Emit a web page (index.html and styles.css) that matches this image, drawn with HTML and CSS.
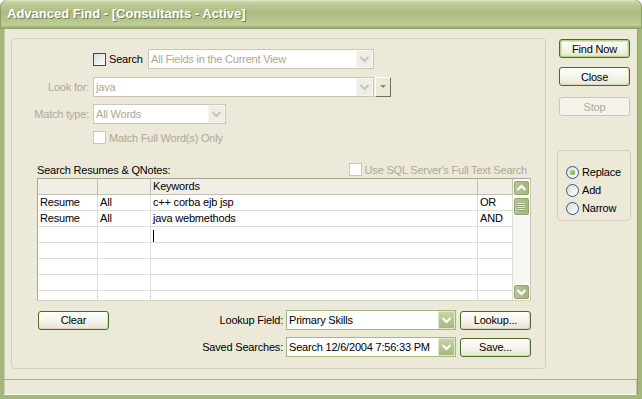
FILE: index.html
```html
<!DOCTYPE html>
<html>
<head>
<meta charset="utf-8">
<title>Advanced Find</title>
<link rel="stylesheet" href="styles.css">
</head>
<body>
<div class="window">
  <div class="titlebar"><span class="title">Advanced Find - [Consultants - Active]</span></div>
  <div class="frame">
    <div class="client">
      <div class="group main">
        <div class="frow r1">
          <div class="lblcol"></div>
          <label class="chkwrap search"><span class="chk"></span><span class="chktext">Search</span></label>
          <div class="combo dis w-fields"><span class="val">All Fields in the Current View</span><span class="ddb dis"><svg width="17" height="18" viewBox="0 0 17 18"><path d="M4.5 7 L8.5 11 L12.5 7" fill="none" stroke="#c8c6ba" stroke-width="2"/></svg></span></div>
        </div>
        <div class="frow r2">
          <div class="lblcol">Look for:</div>
          <div class="combo dis w-look"><span class="val">java</span><span class="ddb dis"><svg width="17" height="18" viewBox="0 0 17 18"><path d="M4.5 7 L8.5 11 L12.5 7" fill="none" stroke="#c8c6ba" stroke-width="2"/></svg></span></div>
          <span class="minibtn"><span class="tri"></span></span>
        </div>
        <div class="frow r3">
          <div class="lblcol">Match type:</div>
          <div class="combo dis w-match"><span class="val">All Words</span><span class="ddb dis"><svg width="17" height="18" viewBox="0 0 17 18"><path d="M4.5 7 L8.5 11 L12.5 7" fill="none" stroke="#c8c6ba" stroke-width="2"/></svg></span></div>
        </div>
        <div class="frow r4">
          <div class="lblcol"></div>
          <label class="chkwrap"><span class="chk dis"></span><span class="chktext distext">Match Full Word(s) Only</span></label>
        </div>
        <div class="secrow">
          <span>Search Resumes &amp; QNotes:</span>
          <label class="chkwrap"><span class="chk dis"></span><span class="chktext distext">Use SQL Server's Full Text Search</span></label>
        </div>
        <div class="gridbox">
          <div class="gtable">
            <div class="c h"></div><div class="c h"></div><div class="c h">Keywords</div><div class="c h"></div>
            <div class="c">Resume</div><div class="c">All</div><div class="c">c++ corba ejb jsp</div><div class="c">OR</div>
            <div class="c">Resume</div><div class="c">All</div><div class="c">java webmethods</div><div class="c">AND</div>
            <div class="c"></div><div class="c"></div><div class="c"><span class="caret"></span></div><div class="c"></div>
            <div class="c"></div><div class="c"></div><div class="c"></div><div class="c"></div>
            <div class="c"></div><div class="c"></div><div class="c"></div><div class="c"></div>
            <div class="c"></div><div class="c"></div><div class="c"></div><div class="c"></div>
            <div class="c"></div><div class="c"></div><div class="c"></div><div class="c"></div>
          </div>
          <div class="vscroll">
            <span class="sbtn"><svg width="15" height="14" viewBox="0 0 15 14"><path d="M3.5 9 L7.5 5 L11.5 9" fill="none" stroke="#fff" stroke-width="2"/></svg></span>
            <span class="thumb"><span class="grip"></span><span class="grip"></span><span class="grip"></span><span class="grip"></span></span>
            <span class="track"></span>
            <span class="sbtn"><svg width="15" height="14" viewBox="0 0 15 14"><path d="M3.5 5 L7.5 9 L11.5 5" fill="none" stroke="#fff" stroke-width="2"/></svg></span>
          </div>
        </div>
        <div class="brow first">
          <button class="btn clear">Clear</button>
          <span class="blabel">Lookup Field:</span>
          <div class="combo en w-bottom"><span class="val">Primary Skills</span><span class="ddb en"><svg width="17" height="18" viewBox="0 0 17 18"><path d="M4.5 7 L8.5 11 L12.5 7" fill="none" stroke="#fff" stroke-width="2"/></svg></span></div>
          <button class="btn">Lookup...</button>
        </div>
        <div class="brow">
          <span class="blabel">Saved Searches:</span>
          <div class="combo en w-bottom"><span class="val">Search 12/6/2004 7:56:33 PM</span><span class="ddb en"><svg width="17" height="18" viewBox="0 0 17 18"><path d="M4.5 7 L8.5 11 L12.5 7" fill="none" stroke="#fff" stroke-width="2"/></svg></span></div>
          <button class="btn">Save...</button>
        </div>
      </div>
      <div class="side">
        <button class="btn default">Find Now</button>
        <button class="btn close">Close</button>
        <button class="btn stop" disabled>Stop</button>
        <div class="group rgroup">
          <label class="radio"><span class="rc checked"></span><span>Replace</span></label>
          <label class="radio"><span class="rc"></span><span>Add</span></label>
          <label class="radio"><span class="rc"></span><span>Narrow</span></label>
        </div>
      </div>
    </div>
    <div class="statusbar"></div>
  </div>
</div>
</body>
</html>
```

FILE: styles.css
```css
* { box-sizing: border-box; }
html, body { margin: 0; padding: 0; background: #ffffff; }
body {
  font-family: "Liberation Sans", Arial, sans-serif;
  font-size: 11px;
  letter-spacing: -0.2px;
  color: #000;
}
.window { width: 642px; height: 399px; display: flex; flex-direction: column; }

.titlebar {
  height: 29px;
  flex: none;
  border-radius: 7px 7px 0 0;
  padding-left: 7px;
  line-height: 28px;
  background: linear-gradient(to bottom, #e3eacc 0px, #c6d3a2 2px, #b6c68f 6px, #abbd84 13px, #b4c58d 20px, #c0cf9a 25px, #a3b67a 27px, #8a9d5f 29px);
  box-shadow: inset 1px 0 0 #8fa266, inset -1px 0 0 #8fa266;
}
.title {
  color: #fff;
  font-weight: bold;
  font-size: 13px;
  letter-spacing: 0;
  text-shadow: 1px 1px 0 #72834c;
}

.frame {
  flex: 1;
  display: flex;
  flex-direction: column;
  background: #ece9d8;
  border: 4px solid #a3b67e;
  border-top: 0;
  box-shadow: inset 1px 0 0 #c4d0a4, inset -1px 0 0 #8fa266;
}
.client {
  height: 350px;
  flex: none;
  display: flex;
  align-items: flex-start;
  padding: 9px 0 0 7px;
}
.statusbar {
  height: 16px;
  flex: none;
  border-top: 1px solid #aca899;
  border-right: 1px solid #c5c2b2;
  border-bottom: 1px solid #fbfaf4;
  margin-right: 1px;
}

.group {
  border: 1px solid #d0d0bf;
  border-radius: 4px;
}
.main {
  width: 535px;
  height: 331px;
  flex: none;
  padding: 10px 14px 0 0;
}

.frow { display: flex; align-items: center; height: 20px; }
.r2 { margin-top: 8px; }
.r3 { margin-top: 7px; }
.r4 { margin-top: 7px; height: 13px; }
.lblcol {
  width: 81px;
  flex: none;
  text-align: right;
  padding-right: 4px;
  color: #aca899;
  white-space: nowrap;
}

.chkwrap { display: flex; align-items: center; white-space: nowrap; }
.chkwrap.search { width: 55px; flex: none; }
.chk {
  width: 13px; height: 13px; flex: none;
  border: 1px solid #1c5180;
  background: linear-gradient(135deg, #dcdcd7, #ffffff);
}
.chk.dis { border-color: #cac8bb; background: #fff; }
.chktext { margin-left: 3px; }
.distext { color: #aca899; }

.combo {
  display: flex;
  align-items: center;
  height: 20px;
  flex: none;
  border: 1px solid #c9c7ba;
  background: #fff;
}
.combo.en { border-color: #a5b97f; }
.combo .val {
  flex: 1;
  padding-left: 2px;
  white-space: nowrap;
  overflow: hidden;
}
.combo.dis .val { color: #aca899; }
.w-fields { width: 226px; }
.w-look { width: 281px; }
.w-match { width: 133px; }
.w-bottom { width: 170px; }

.ddb {
  width: 17px; height: 18px; flex: none;
  display: flex;
}
.ddb.dis { background: #eeede6; box-shadow: inset 0 0 0 1px #f7f6f1; }
.ddb.en {
  border-radius: 2px;
  background: linear-gradient(to bottom, #c9d5a9, #a3b67d);
  box-shadow: inset 0 0 0 1px #dfe7cb;
}

.minibtn {
  width: 16px; height: 20px; flex: none;
  margin-left: 1px;
  background: #ece9d8;
  border: 1px solid;
  border-color: #ffffff #716f64 #716f64 #ffffff;
  display: flex;
  justify-content: center;
  padding-top: 7px;
}
.tri {
  width: 0; height: 0;
  border-left: 3px solid transparent;
  border-right: 3px solid transparent;
  border-top: 3px solid #8a887c;
}

.secrow {
  margin: 19px 4px 0 25px;
  height: 13px;
  display: flex;
  align-items: center;
  justify-content: space-between;
}

.gridbox {
  margin: 2px 0 0 25px;
  width: 494px;
  height: 123px;
  display: flex;
  border: 1px solid #aca899;
  border-right-color: #c8c5b6;
  border-bottom-color: #d8d5c6;
  background: #fff;
  overflow: hidden;
}
.gtable {
  display: grid;
  grid-template-columns: 60px 53px 327px 35px;
  grid-auto-rows: 16px;
  flex: none;
  height: 121px;
  overflow: hidden;
}
.c {
  border-right: 1px solid #e0ded4;
  border-bottom: 1px solid #e0ded4;
  padding-left: 2px;
  line-height: 15px;
  white-space: nowrap;
  overflow: hidden;
}
.c.h {
  background: #f1efe5;
  border-right-color: #c3c0b0;
  border-bottom-color: #c3c0b0;
}
.caret {
  display: inline-block;
  width: 1px;
  height: 12px;
  background: #000;
  vertical-align: middle;
  margin-top: 1px;
}

.vscroll {
  width: 17px;
  flex: none;
  display: flex;
  flex-direction: column;
  background: #f8f8f3;
  padding: 1px 0 0 0;
}
.sbtn, .thumb {
  width: 17px;
  flex: none;
  border-radius: 3px;
  border: 1px solid #ffffff;
  background: linear-gradient(to right, #b9c79a, #a3b47f);
  box-shadow: inset 0 0 0 1px #8fa36a;
  display: flex;
  align-items: center;
  justify-content: center;
}
.sbtn { height: 16px; }
.thumb {
  height: 19px;
  margin-top: 1px;
  flex-direction: column;
  gap: 1px;
}
.grip { width: 7px; height: 1px; background: #e3e9d2; box-shadow: 0 1px 0 #8fa36a; }
.track { flex: 1; }

.brow {
  display: flex;
  align-items: center;
  height: 20px;
  margin: 7px 0 0 25px;
  justify-content: flex-end;
}
.brow.first { margin-top: 9px; }
.blabel { margin-right: 3px; white-space: nowrap; }
.brow .btn { margin-left: 4px; }
.brow .btn.clear { margin-left: 1px; margin-right: auto; }

.btn {
  width: 71px;
  height: 19px;
  flex: none;
  padding: 0;
  font-family: "Liberation Sans", Arial, sans-serif;
  font-size: 11px;
  letter-spacing: -0.2px;
  color: #000;
  border: 1px solid #4a6a2c;
  border-radius: 3px;
  background: linear-gradient(to bottom, #fffffb 0%, #f6f4ec 50%, #e8e4d4 100%);
  box-shadow: inset -1px -1px 0 #dcd7c2;
}
.btn.default {
  box-shadow: inset 0 0 0 1px #b6d08e, inset 0 0 0 2px #d9e6c0;
}
.btn.stop {
  color: #aca899;
  border-color: #cac8bb;
  background: #f5f4ea;
  box-shadow: none;
}

.side {
  width: 74px;
  flex: none;
  margin-left: 11px;
  padding-top: 1px;
  display: flex;
  flex-direction: column;
  align-items: flex-end;
}
.side .btn { margin-right: 1px; }
.btn.close { margin-top: 9px; }
.btn.stop { margin-top: 11px; }

.rgroup {
  width: 74px;
  height: 71px;
  margin-top: 34px;
  padding: 12px 0 0 8px;
  display: flex;
  flex-direction: column;
}
.radio { display: flex; align-items: center; height: 18px; }
.rc {
  width: 13px; height: 13px; flex: none;
  border-radius: 50%;
  border: 1px solid #2a5a8a;
  background: linear-gradient(135deg, #dcdcd4, #ffffff);
  margin-right: 3px;
  display: flex;
  align-items: center;
  justify-content: center;
}
.rc.checked::after {
  content: "";
  width: 5px; height: 5px;
  border-radius: 50%;
  background: radial-gradient(circle at 40% 40%, #a8e08a, #3f9a22);
}
```
